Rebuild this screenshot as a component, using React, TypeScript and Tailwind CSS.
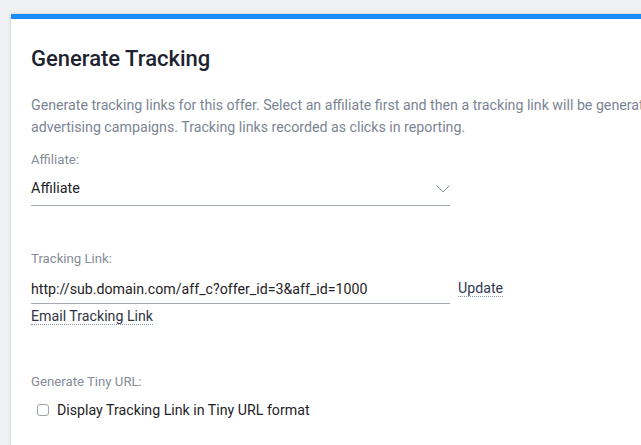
import React from "react";

export default function App() {
  return (
    <div
      className="h-[445px] w-[641px] overflow-hidden bg-[#eff0f2] pt-[14px] pl-[11px]"
      style={{ fontFamily: "Roboto, 'Noto Sans', sans-serif" }}
    >
      <div className="w-[900px] min-h-[480px] bg-white border-t-[5px] border-[#1a8cff] shadow-[0_0_3px_rgba(0,0,0,0.18)] pl-[20px] pt-[26px]">
        <h1 className="text-[22px] leading-[28px] font-medium text-[#1e2330]">Generate Tracking</h1>
        <p className="mt-[21px] text-[14.2px] leading-[22px] text-[#7d8593] whitespace-nowrap">
          Generate tracking links for this offer. Select an affiliate first and then a tracking link will be generated for you to use in your
          <br />
          advertising campaigns. Tracking links recorded as clicks in reporting.
        </p>

        <div className="mt-[13px] text-[13.2px] leading-[18px] text-[#858c97]">Affiliate:</div>
        <div className="mt-[9px] w-[419px] flex items-start justify-between border-b border-[#a3aab6] pb-[5px]">
          <span className="text-[14.4px] leading-[22px] text-[#1f2328]">Affiliate</span>
          <svg className="mt-[7px]" width="14" height="8" viewBox="0 0 14 8" fill="none">
            <path d="M0.5 0.5 L7 7 L13.5 0.5" stroke="#8a93a2" strokeWidth="1" />
          </svg>
        </div>

        <div className="mt-[44px] text-[13.2px] leading-[18px] text-[#858c97]">Tracking Link:</div>
        <div className="mt-[9px] flex items-start gap-[8px]">
          <div className="w-[419px] border-b border-[#a3aab6] pb-[2px]">
            <span className="text-[14.2px] leading-[22px] text-[#1f2328]">
              http://sub.domain.com/aff_c?offer_id=3&amp;aff_id=1000
            </span>
          </div>
          <span className="mt-[3px] inline-block text-[14.2px] leading-[16px] text-[#2f3b52] border-b border-dotted border-[#8a96ab]">
            Update
          </span>
        </div>
        <div>
          <span className="inline-block text-[14.2px] leading-[16px] text-[#2f3544] border-b border-dotted border-[#8a96ab]">
            Email Tracking Link
          </span>
        </div>

        <div className="mt-[45px] text-[13.2px] leading-[18px] text-[#858c97]">Generate Tiny URL:</div>
        <div className="mt-[8px] flex items-center gap-[8px] pl-[6px]">
          <span className="w-[12px] h-[12px] rounded-[3px] border border-[#9ea4ad] bg-white" />
          <span className="text-[14.2px] leading-[22px] text-[#1f2328]">Display Tracking Link in Tiny URL format</span>
        </div>
      </div>
    </div>
  );
}
